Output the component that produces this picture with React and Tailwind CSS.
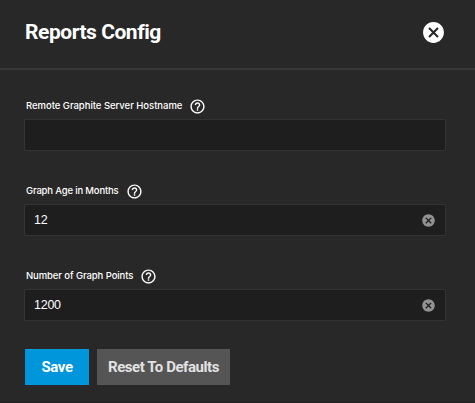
import { MdCancel, MdHelpOutline } from "react-icons/md";

const fields = [
  { label: "Remote Graphite Server Hostname", value: "", spacing: "tracking-[-0.03px]" },
  { label: "Graph Age in Months", value: "12", spacing: "tracking-[-0.17px]" },
  { label: "Number of Graph Points", value: "1200", spacing: "tracking-[-0.09px]" },
];

function Field({ label, value, spacing }) {
  return (
    <div>
      <div className="flex h-5 items-center gap-[7px] pl-[2px]">
        <span className={`whitespace-nowrap text-[9.5px] font-medium leading-5 ${spacing}`}>{label}</span>
        <MdHelpOutline className="size-[17px]" />
      </div>
      <div className="mt-[3px] flex h-8 items-center justify-between rounded-[1px] border border-[#333333] bg-[#1e1e1e] pl-[9px] pr-[9px]">
        <span className="font-['Liberation_Sans',sans-serif] text-[12.5px] tracking-[-0.25px] text-white">{value}</span>
        {value && <MdCancel className="size-[15px] text-[#929292]" />}
      </div>
    </div>
  );
}

export default function App() {
  return (
    <main className="flex h-[403px] w-[475px] flex-col overflow-hidden border-b border-[#202020] bg-[#282828] font-['Inter',sans-serif] text-white">
      <header className="flex h-[70px] shrink-0 items-center justify-between border-b-2 border-[#383838] pb-[4px] pl-[25px] pr-[29px]">
        <h1 className="font-['Roboto',sans-serif] text-[21px] font-bold leading-7 tracking-[-0.45px]">Reports Config</h1>
        <MdCancel className="size-[25px]" />
      </header>
      <section className="flex flex-col gap-[30px] pl-6 pr-[29px] pt-[26px]">
        {fields.map((field) => (
          <Field key={field.label} {...field} />
        ))}
      </section>
      <footer className="mt-7 flex gap-2 pl-[25px] font-['Roboto',sans-serif] text-[15px] font-bold">
        <button className="h-9 w-16 bg-[#0096db] tracking-[-0.4px]">Save</button>
        <button className="h-9 w-[133px] whitespace-nowrap bg-[#555555] tracking-[-0.45px] text-[#e2e2e2]">Reset To Defaults</button>
      </footer>
    </main>
  );
}
